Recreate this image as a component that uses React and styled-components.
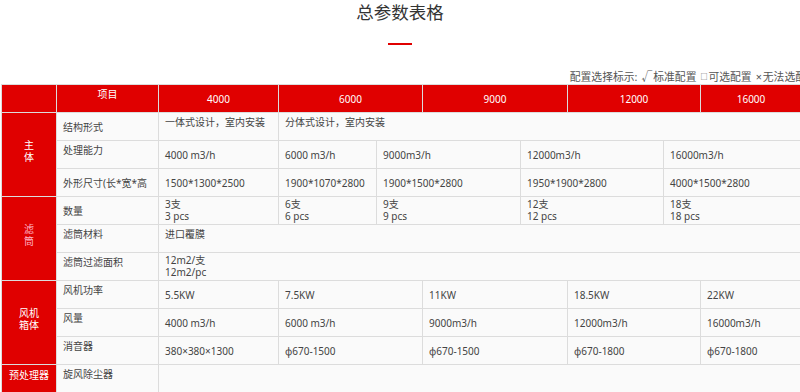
import React from "react";
import styled, { createGlobalStyle } from "styled-components";

const GlobalStyle = createGlobalStyle`
  html, body {
    margin: 0;
    padding: 0;
    background: #ffffff;
  }
  body {
    overflow: hidden;
  }
`;

const Page = styled.div`
  width: 800px;
  height: 392px;
  overflow: hidden;

  font-family: "Noto Sans", "Noto Sans CJK SC", sans-serif;
  color: #444;
`;

const Title = styled.h2`
  margin: 0;
  height: 25px;

  font-size: 17.5px;
  font-weight: 400;
  line-height: 25px;
  text-align: center;

  color: #333;
`;

const TitleBar = styled.div`
  width: 24px;
  height: 2px;
  margin: 18px auto 0;
  background: #e00000;
`;

const Legend = styled.div`
  display: flex;
  align-items: center;
  justify-content: flex-end;
  margin: 25px -6px 0 0;
  height: 14px;

  font-size: 10.8px;
  line-height: 14px;
  white-space: nowrap;

  color: #555;
`;

const Mark = styled.span`
  margin: 0 1px 0 4px;
  font-size: ${({ $small }) => ($small ? "7px" : "10.8px")};
`;

const Table = styled.div`
  width: 800px;
  margin-left: 1px;
  border-top: 1px solid #dcdcdc;
  border-left: 1px solid #dcdcdc;

  font-size: 10px;
`;

const Row = styled.div`
  display: flex;
  height: 28px;
`;

const Group = styled.div`
  display: flex;
`;

const GroupRows = styled.div`
  flex: 1;
  display: flex;
  flex-direction: column;
`;

const Cell = styled.div`
  box-sizing: border-box;
  width: ${({ $w }) => ($w ? `${$w}px` : "auto")};
  flex: ${({ $w }) => ($w ? "none" : "1")};
  height: 100%;
  padding: ${({ $top }) => ($top ? "1px 6px 0" : "0 6px")};
  overflow: hidden;

  display: flex;
  flex-direction: column;
  justify-content: ${({ $top }) => ($top ? "flex-start" : "center")};

  border-right: 1px solid #dcdcdc;
  border-bottom: 1px solid #dcdcdc;
  background: #fafafa;

  line-height: 16px;
  white-space: nowrap;
`;

const HeadCell = styled(Cell)`
  align-items: center;
  background: #e00000;
  color: #ffffff;
`;

const CatCell = styled.div`
  box-sizing: border-box;
  width: 55px;
  flex: none;
  padding-top: ${({ $rows }) => ($rows > 1 ? "0" : "2px")};
  padding-bottom: ${({ $rows }) => ($rows > 1 ? "7px" : "0")};

  display: flex;
  flex-direction: column;
  align-items: center;
  justify-content: ${({ $rows }) => ($rows > 1 ? "center" : "flex-start")};

  border-right: 1px solid #dcdcdc;
  border-bottom: 1px solid #dcdcdc;
  background: #e00000;

  font-size: 10px;
  line-height: ${({ $rows }) => ($rows > 1 ? "12px" : "16px")};
  color: ${({ $pink }) => ($pink ? "#ffb3c6" : "#ffffff")};
`;

const Line = styled.span`
  line-height: 11.5px;
`;

const WIDE = [120, 144, 145, 133, null];
const NARROW = [120, 98, 144, 143, null];

const HEADS = ["4000", "6000", "9000", "12000", "16000"];

const GROUPS = [
  {
    cat: ["主", "体"],
    rows: [
      {
        label: "结构形式",
        cells: [
          { w: 120, text: "一体式设计，室内安装", top: true },
          { text: "分体式设计，室内安装", top: true },
        ],
      },
      {
        label: "处理能力",
        labelTop: true,
        widths: NARROW,
        values: ["4000 m3/h", "6000 m3/h", "9000m3/h", "12000m3/h", "16000m3/h"],
      },
      {
        label: "外形尺寸(长*宽*高",
        widths: NARROW,
        values: [
          "1500*1300*2500",
          "1900*1070*2800",
          "1900*1500*2800",
          "1950*1900*2800",
          "4000*1500*2800",
        ],
      },
    ],
  },
  {
    cat: ["滤", "筒"],
    pink: true,
    rows: [
      {
        label: "数量",
        widths: NARROW,
        values: [
          ["3支", "3 pcs"],
          ["6支", "6 pcs"],
          ["9支", "9 pcs"],
          ["12支", "12 pcs"],
          ["18支", "18 pcs"],
        ],
      },
      {
        label: "滤筒材料",
        labelTop: true,
        cells: [{ text: "进口覆膜", top: true }],
      },
      {
        label: "滤筒过滤面积",
        labelTop: true,
        cells: [{ text: ["12m2/支", "12m2/pc"] }],
      },
    ],
  },
  {
    cat: ["风机", "箱体"],
    rows: [
      {
        label: "风机功率",
        labelTop: true,
        widths: WIDE,
        values: ["5.5KW", "7.5KW", "11KW", "18.5KW", "22KW"],
      },
      {
        label: "风量",
        labelTop: true,
        widths: WIDE,
        values: ["4000 m3/h", "6000 m3/h", "9000m3/h", "12000m3/h", "16000m3/h"],
      },
      {
        label: "消音器",
        labelTop: true,
        widths: WIDE,
        values: ["380×380×1300", "φ670-1500", "φ670-1500", "φ670-1800", "φ670-1800"],
      },
    ],
  },
  {
    cat: ["预处理器"],
    rows: [
      {
        label: "旋风除尘器",
        labelTop: true,
        cells: [{ text: "", top: true }],
      },
    ],
  },
];

function CellText({ text }) {
  if (Array.isArray(text)) {
    return text.map((t) => <Line key={t}>{t}</Line>);
  }
  return text;
}

function DataRow({ row }) {
  const cells = row.cells
    ? row.cells
    : row.values.map((v, i) => ({ w: row.widths[i], text: v }));

  return (
    <Row>
      <Cell $w={102} $top={row.labelTop}>
        {row.label}
      </Cell>
      {cells.map((c, i) => (
        <Cell key={i} $w={c.w} $top={c.top}>
          <CellText text={c.text} />
        </Cell>
      ))}
    </Row>
  );
}

export default function App() {
  return (
    <Page>
      <GlobalStyle />
      <Title>总参数表格</Title>
      <TitleBar />
      <Legend>
        配置选择标示:
        <Mark>√</Mark>标准配置
        <Mark $small>□</Mark>可选配置
        <Mark>×</Mark>无法选配
      </Legend>
      <Table>
        <Row>
          <HeadCell $w={55} />
          <HeadCell $w={102} $top>
            项目
          </HeadCell>
          {HEADS.map((h, i) => (
            <HeadCell key={h} $w={WIDE[i]}>
              {h}
            </HeadCell>
          ))}
        </Row>
        {GROUPS.map((g) => (
          <Group key={g.cat.join("")}>
            <CatCell $rows={g.rows.length} $pink={g.pink}>
              {g.cat.map((c) => (
                <span key={c}>{c}</span>
              ))}
            </CatCell>
            <GroupRows>
              {g.rows.map((r) => (
                <DataRow key={r.label} row={r} />
              ))}
            </GroupRows>
          </Group>
        ))}
      </Table>
    </Page>
  );
}
